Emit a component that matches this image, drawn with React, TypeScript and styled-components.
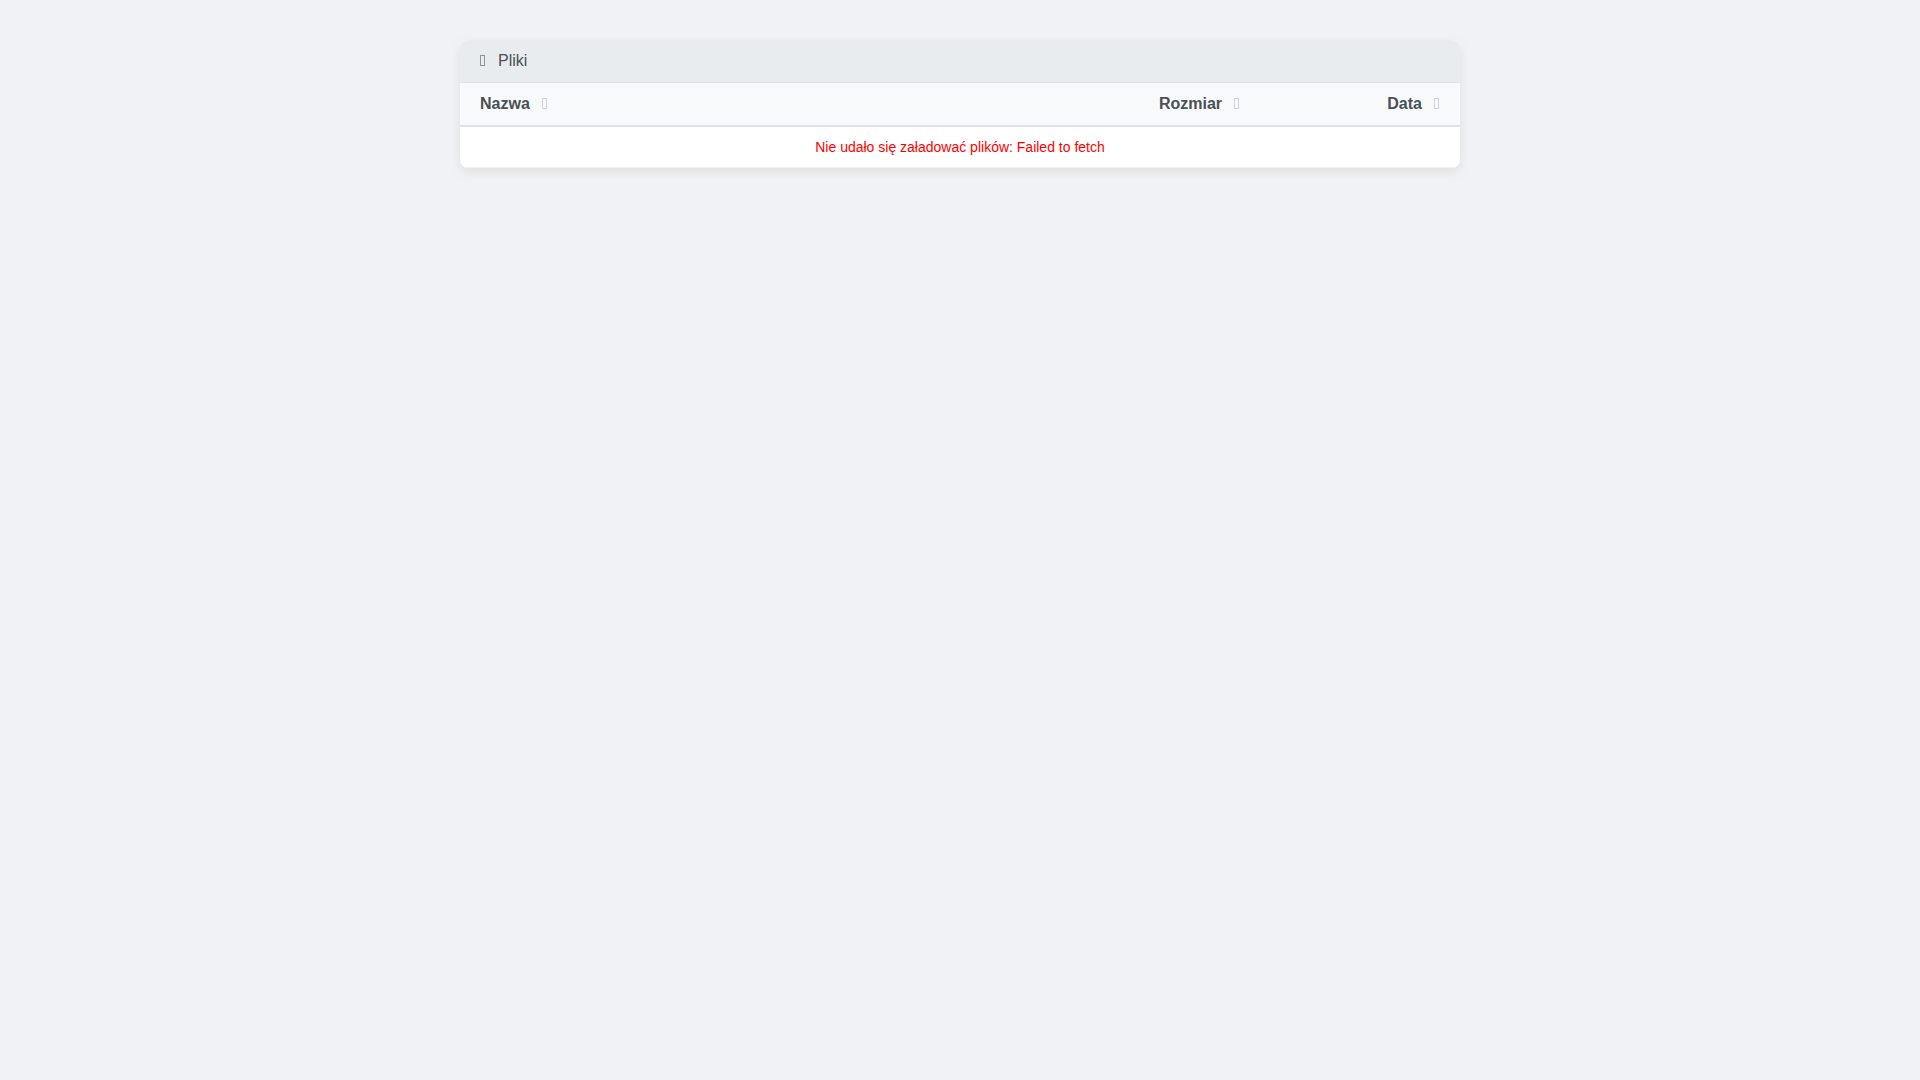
import React, { useState } from "react";
import styled, { createGlobalStyle } from "styled-components";

const GlobalStyle = createGlobalStyle`
  body {
    margin: 0;
    background: #f0f2f5;
    color: #495057;
    font-family: "Liberation Sans", Arial, sans-serif;
    font-size: 16px;
    line-height: 18px;
  }
`;

const Page = styled.main`
  padding: 40px 20px;
`;

const Card = styled.section`
  max-width: 1000px;
  margin: 0 auto;
  overflow: hidden;
  background: #ffffff;
  border-radius: 8px;
  box-shadow: 0 4px 12px rgba(0, 0, 0, 0.08);
`;

const CardHeader = styled.header`
  display: flex;
  align-items: center;
  gap: 12px;
  padding: 12px 20px;
  background: #e9ecef;
  border-bottom: 1px solid #dee2e6;
`;

const Title = styled.h1`
  margin: 0;
  font-size: 16px;
  font-weight: 400;
`;

const Table = styled.table`
  width: 100%;
  table-layout: fixed;
  border-collapse: separate;
  border-spacing: 0;
`;

const HeadCell = styled.th<{ $align: "left" | "right"; $width?: string }>`
  width: ${(p) => p.$width ?? "auto"};
  box-sizing: border-box;
  padding: 12px 20px;
  background: #f8f9fa;
  border-bottom: 2px solid #dee2e6;
  text-align: ${(p) => p.$align};
`;

const SortButton = styled.button`
  display: inline-flex;
  align-items: center;
  gap: 12px;
  padding: 0;
  border: 0;
  background: none;
  color: inherit;
  font: inherit;
  font-weight: 700;
  line-height: 18px;
  vertical-align: top;
  cursor: pointer;
`;

const MessageCell = styled.td`
  padding: 12px 20px;
  border-bottom: 1px solid #f1f3f5;
  color: #ff0000;
  font-size: 14px;
  line-height: 16px;
  text-align: center;
`;

const Glyph = styled.svg<{ $color: string }>`
  display: block;
  flex: none;
  color: ${(p) => p.$color};
`;

function BoxIcon({ color }: { color: string }) {
  return (
    <Glyph $color={color} width="6" height="12" viewBox="0 0 6 12" aria-hidden="true">
      <rect x="0.5" y="0.5" width="4" height="10" fill="none" stroke="currentColor" />
    </Glyph>
  );
}

type Column = { key: string; label: string; align: "left" | "right"; width?: string };

const columns: Column[] = [
  { key: "name", label: "Nazwa", align: "left" },
  { key: "size", label: "Rozmiar", align: "right", width: "20%" },
  { key: "date", label: "Data", align: "right", width: "20%" },
];

export default function App() {
  const [sort, setSort] = useState<string | null>(null);

  return (
    <>
      <GlobalStyle />
      <Page>
        <Card>
          <CardHeader>
            <BoxIcon color="#8f9499" />
            <Title>Pliki</Title>
          </CardHeader>
          <Table>
            <thead>
              <tr>
                {columns.map((c) => (
                  <HeadCell
                    key={c.key}
                    scope="col"
                    $align={c.align}
                    $width={c.width}
                    aria-sort={sort === c.key ? "ascending" : "none"}
                  >
                    <SortButton type="button" onClick={() => setSort(c.key)}>
                      {c.label}
                      <BoxIcon color="#cfd2d8" />
                    </SortButton>
                  </HeadCell>
                ))}
              </tr>
            </thead>
            <tbody>
              <tr>
                <MessageCell colSpan={columns.length}>
                  Nie udało się załadować plików: Failed to fetch
                </MessageCell>
              </tr>
            </tbody>
          </Table>
        </Card>
      </Page>
    </>
  );
}
